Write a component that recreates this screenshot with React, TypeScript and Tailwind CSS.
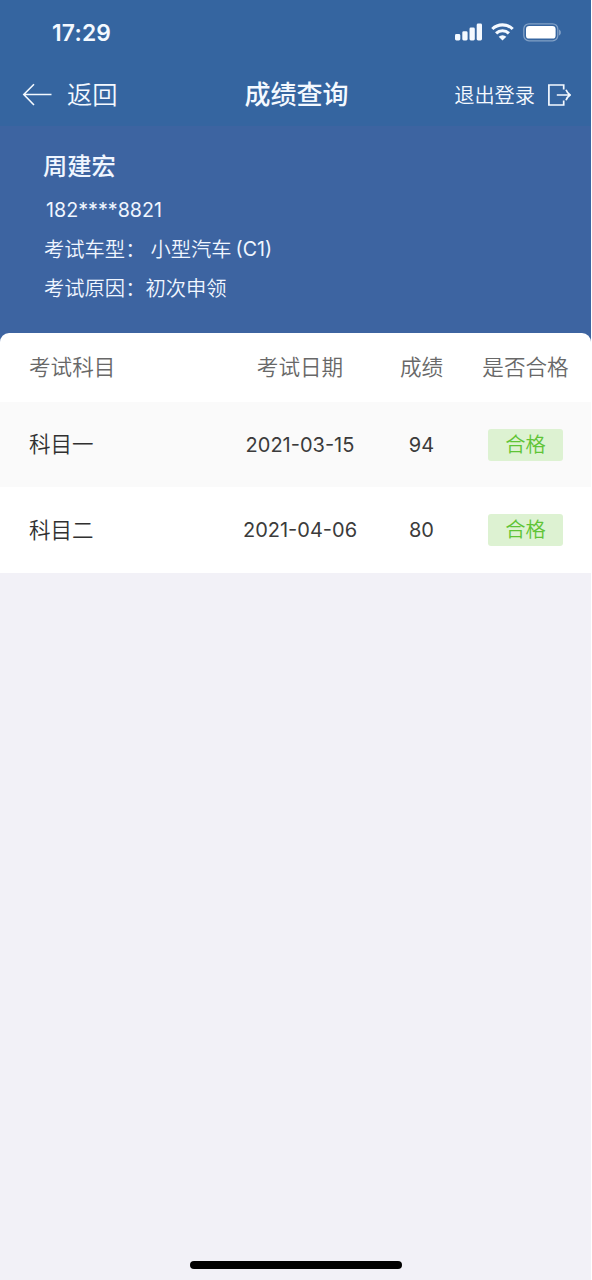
import React from 'react';

const results = [
  { subject: '科目一', date: '2021-03-15', score: 94, passed: '合格' },
  { subject: '科目二', date: '2021-04-06', score: 80, passed: '合格' },
];

function StatusBar() {
  return (
    <div className="h-16 pt-px pl-[52px] pr-[29px] flex items-center justify-between">
      <span className="text-[22.8px] leading-8 font-semibold tracking-[0.2px]">17:29</span>
      <div className="-mt-px flex items-center">
        {/* Signal */}
        <svg width="28" height="18" viewBox="0 0 28 18" fill="currentColor">
          <rect x="0" y="11" width="5.3" height="6.5" rx="1.4" />
          <rect x="7.3" y="8.3" width="5.3" height="9.2" rx="1.4" />
          <rect x="14.5" y="4.5" width="5.3" height="13" rx="1.4" />
          <rect x="21.7" y="0.5" width="5.3" height="17" rx="1.4" />
        </svg>
        {/* Wifi */}
        <svg className="ml-2" width="23" height="18" viewBox="0 0 23 18">
          <g fill="none" stroke="currentColor" strokeWidth="3.1">
            <path d="M1.3 6a14.6 14.6 0 0 1 20.4 0" />
            <path d="M5.1 10.3a9.2 9.2 0 0 1 12.8 0" />
          </g>
          <path d="M11.5 17.4 7.7 13.7a5.5 5.5 0 0 1 7.6 0z" fill="currentColor" />
        </svg>
        {/* Battery */}
        <svg className="ml-[9px]" width="39" height="19" viewBox="0 0 39 19">
          <rect x="0.8" y="0.8" width="34" height="17" rx="5.2" fill="none" stroke="currentColor" strokeWidth="1.3" opacity="0.4" />
          <rect x="3" y="3" width="29.6" height="12.6" rx="3.2" fill="white" />
          <path d="M36.2 6.4c2 1 2 5 0 6z" fill="currentColor" opacity="0.5" />
        </svg>
      </div>
    </div>
  );
}

function NavBar() {
  return (
    <div className="h-[62px] pl-[22px] pr-5 grid grid-cols-[1fr_auto_1fr] items-center">
      <button className="flex items-center gap-[15px]">
        <svg width="30" height="24" viewBox="0 0 30 24" fill="none" stroke="currentColor" strokeWidth="1.6">
          <path d="M29.5 11.5H1.8M12 1.2 1.8 11.5 12 22" />
        </svg>
        <span className="text-[25.3px] leading-8 font-[350]">返回</span>
      </button>
      <h1 className="text-[26px] leading-8 font-medium">成绩查询</h1>
      <button className="flex items-center justify-end gap-[13px]">
        <span className="pt-px text-[20.2px] leading-8 font-[350]">退出登录</span>
        <svg className="-mt-px" width="23" height="22" viewBox="0 0 23 22" fill="none" stroke="currentColor" strokeWidth="1.7">
          <path d="M15.7 5.6V1H.9v20h14.8v-4.6M8.8 11h13M18 5.8q1.4 3.6 4.1 5.2-2.7 1.6-4.1 5.2" />
        </svg>
      </button>
    </div>
  );
}

export default function App() {
  return (
    <div className="w-[592px] h-[1280px] pr-px bg-white font-['Inter','Noto_Sans_CJK_SC',sans-serif]">
      <div className="h-full flex flex-col bg-[#f2f1f7]">
        <header className="bg-[#3565a0] text-[#f4f9ff]">
          <StatusBar />
          <NavBar />
        </header>

        {/* Candidate info */}
        <section className="h-[207px] shrink-0 bg-[#3d64a1] text-[#f0f6ff] pl-[43px] pt-6 text-[20.3px] font-[350]">
          <h2 className="h-8 text-[24.3px] leading-8 font-medium">周建宏</h2>
          <p className="mt-3 pl-[3px] h-8 leading-8 text-[19.7px] font-normal">182****8821</p>
          <p className="mt-2 pl-px h-8 leading-8 flex">
            <span>考试车型：</span>
            <span className="ml-[5px]">小型汽车</span>
            <span className="ml-1 -mt-px text-[19.6px] font-normal">(C1)</span>
          </p>
          <p className="mt-[7px] pl-px h-8 leading-8">考试原因：初次申领</p>
        </section>

        {/* Results */}
        <div className="bg-[#3d64a1]">
          <div className="bg-white rounded-t-[9px]">
            <div className="h-[69px] pl-[29px] grid grid-cols-[187px_168px_75px_133px] items-center text-center text-[21.6px] text-[#686868] font-[350]">
              <span className="text-left">考试科目</span>
              <span>考试日期</span>
              <span>成绩</span>
              <span>是否合格</span>
            </div>
            {results.map((item) => (
              <div
                key={item.subject}
                className="h-[85px] last:h-[86px] pl-[29px] grid grid-cols-[187px_168px_75px_133px] items-center justify-items-center text-[20px] text-[#3b3b3b] odd:bg-white even:bg-[#fafafa]"
              >
                <span className="justify-self-start text-[21.5px] font-[350] text-[#303030]">{item.subject}</span>
                <span>{item.date}</span>
                <span>{item.score}</span>
                <span className="w-[75px] h-8 leading-8 rounded-[3px] bg-[#ddf2d2] text-[20.3px] text-[#5fc436] font-[350] text-center">
                  {item.passed}
                </span>
              </div>
            ))}
          </div>
        </div>

        {/* Home indicator */}
        <div className="mt-auto mb-[11px] mx-auto w-[212px] h-2 rounded-full bg-black" />
      </div>
    </div>
  );
}
